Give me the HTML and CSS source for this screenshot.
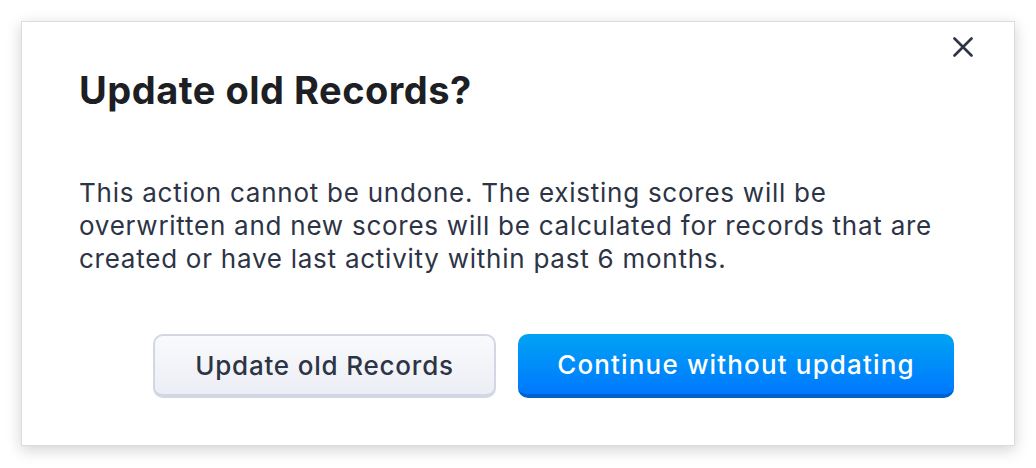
FILE: index.html
```html
<!DOCTYPE html>
<html lang="en">
<head>
    <meta charset="UTF-8">
    <title>Update old Records</title>
    <link rel="stylesheet" href="styles.css">
</head>
<body>
    <div class="dialog">
        <button class="close" aria-label="Close">
            <svg width="20" height="20" viewBox="0 0 20 20">
                <path d="M1.5 1.5 L18.5 18.5 M18.5 1.5 L1.5 18.5" stroke="#2e3445" stroke-width="2.6" stroke-linecap="round" fill="none"/>
            </svg>
        </button>
        <h1 class="title">Update old Records?</h1>
        <p class="message">This action cannot be undone. The existing scores will be overwritten and new scores will be calculated for records that are created or have last activity within past 6 months.</p>
        <div class="actions">
            <button class="btn btn-grey">Update old Records</button>
            <button class="btn btn-blue">Continue without updating</button>
        </div>
    </div>
</body>
</html>
```

FILE: styles.css
```css
*{
    padding: 0;
    margin: 0;
    box-sizing: border-box;
}
html, body{
    background: #ffffff;
}
body{
    padding: 21px;
    font-family: Inter, "Noto Sans", sans-serif;
}
.dialog{
    position: relative;
    width: 994px;
    height: 425px;
    background: #ffffff;
    border: 1px solid #dcdcdc;
    box-shadow: 0 4px 14px rgba(0,0,0,0.18);
    padding: 45px 58px 0 57px;
}
.close{
    position: absolute;
    top: 10px;
    right: 36px;
    width: 30px;
    height: 30px;
    border: none;
    background: none;
    display: flex;
    align-items: center;
    justify-content: center;
}
.title{
    font-size: 38px;
    font-weight: 700;
    color: #1e1f24;
    line-height: 46px;
    letter-spacing: 0.5px;
}
.message{
    margin-top: 63px;
    font-size: 26px;
    line-height: 33px;
    color: #2d3445;
    letter-spacing: 0.75px;
    width: 870px;
}
.actions{
    margin-top: 59px;
    display: flex;
    justify-content: flex-end;
    gap: 22px;
    padding-right: 2px;
}
.btn{
    height: 64px;
    border-radius: 10px;
    font-family: Inter, "Noto Sans", sans-serif;
    font-size: 26px;
    font-weight: 500;
    letter-spacing: 0.8px;
}
.btn-grey{
    width: 343px;
    color: #2d3445;
    background: linear-gradient(#f9fafc, #eceef5);
    border: 2px solid #d3d7e3;
    border-bottom-width: 4px;
}
.btn-blue{
    width: 436px;
    color: #ffffff;
    letter-spacing: 1.15px;
    background: linear-gradient(#00a3f4, #0078ff);
    border: none;
    border-bottom: 4px solid #0062cb;
}
```
